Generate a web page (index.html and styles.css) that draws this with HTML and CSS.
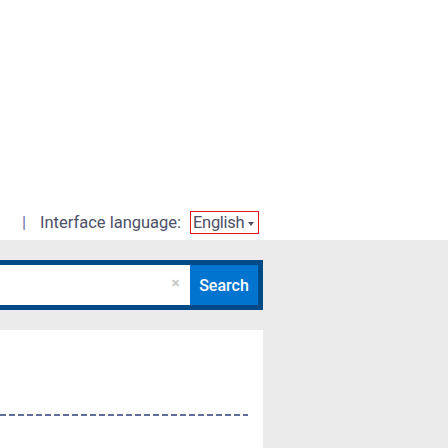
FILE: index.html
```html
<!DOCTYPE html>
<html>
<head>
<meta charset="utf-8">
<link rel="stylesheet" href="styles.css">
</head>
<body>
<div class="top">
  <div class="langrow">
    <span class="sep">|</span>
    <span class="label">Interface language:</span>
    <span class="select"><span class="val">English</span><span class="caret"></span></span>
  </div>
</div>
<div class="band">
  <div class="searchbox">
    <div class="field"><span class="clear">&#x2715;</span></div>
    <div class="btn">Search</div>
  </div>
</div>
<div class="lower">
  <div class="main">
    <div class="dashes"></div>
  </div>
  <div class="side"></div>
</div>
</body>
</html>
```
FILE: styles.css
```css
html, body { margin: 0; padding: 0; }
body { width: 448px; height: 448px; overflow: hidden; background: #fff; font-family: Roboto, "Noto Sans", sans-serif; }
.top { height: 240px; display: flex; align-items: flex-end; }
.langrow { display: flex; align-items: center; height: 27px; margin-bottom: 4px; color: #4d5068; font-size: 16.5px; white-space: nowrap; width: 448px; }
.langrow > span { flex-shrink: 0; }
.sep { margin-left: 22px; width: 18px; color: #6c6ea8; }
.label { width: 150px; }
.select { border: 1px solid #e3141a; height: 23px; width: 69px; padding-left: 2px; display: flex; align-items: center; box-sizing: border-box; }
.val { letter-spacing: -0.3px; }
.caret { display: inline-block; width: 0; height: 0; border-left: 3.5px solid transparent; border-right: 3.5px solid transparent; border-top: 4px solid #4d5068; margin-left: auto; margin-right: 4px; margin-top: 2px; }
.band { background: #ebebeb; height: 90px; padding-top: 20px; box-sizing: border-box; }
.searchbox { width: 263px; height: 50px; border: 5px solid #004b87; border-left: none; box-sizing: border-box; display: flex; }
.field { flex: 1; background: #fff; position: relative; }
.clear { position: absolute; left: 171px; top: 12px; font-size: 11px; color: #c4c4c4; font-weight: bold; }
.btn { width: 68px; background: #0074cf; color: #fff; font-size: 16px; font-weight: 500; display: flex; align-items: center; justify-content: center; }
.lower { display: flex; height: 118px; }
.main { width: 263px; background: #fff; padding-top: 84px; box-sizing: border-box; }
.dashes { width: 248px; height: 2px; background: repeating-linear-gradient(to right, #5f6e9e 0 6px, transparent 6px 9px); }
.side { flex: 1; background: #ebebeb; }
```
